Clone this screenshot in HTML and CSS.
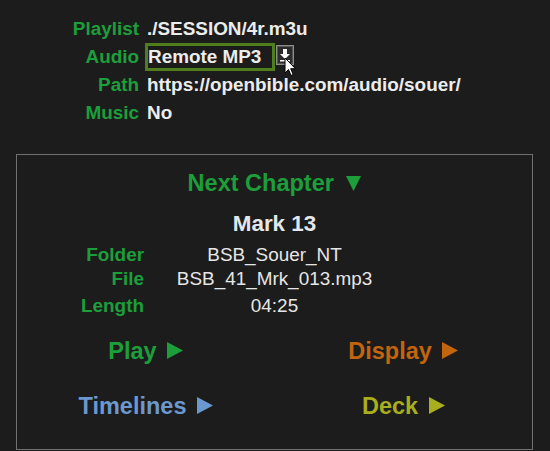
FILE: index.html
```html
<!DOCTYPE html>
<html lang="en">
<head>
    <meta charset="UTF-8" />
    <meta name="viewport" content="width=device-width, initial-scale=1.0" />
    <title>Bible Audio Player</title>
    <link rel="stylesheet" href="styles.css">
</head>
<body>
    <div class="settings">
        <span class="label">Playlist</span>
        <span class="value">./SESSION/4r.m3u</span>

        <span class="label">Audio</span>
        <span class="value">
            <span class="select">Remote MP3</span>
            <span class="drop">
                <svg width="18" height="20" viewBox="0 0 18 20">
                    <rect x="0.5" y="0.5" width="17" height="19" fill="#2b2b2b" stroke="#8c8c8c" />
                    <rect x="1.5" y="1.5" width="15" height="17" fill="none" stroke="#555" />
                    <path d="M7 4h4v5h3l-5 5-5-5h3z" fill="#fff" />
                    <rect x="4" y="15" width="10" height="1.5" fill="#fff" />
                </svg>
                <svg class="cursor" width="13" height="20" viewBox="0 0 13 20">
                    <path d="M1 1v15l3.5-3.5 2.5 6 2.2-1-2.5-5.8H11.5z" fill="#fff" stroke="#000" stroke-width="1" stroke-linejoin="round" />
                </svg>
            </span>
        </span>

        <span class="label">Path</span>
        <span class="value">https://openbible.com/audio/souer/</span>

        <span class="label">Music</span>
        <span class="value">No</span>
    </div>

    <div class="panel">
        <div class="next">Next Chapter<svg class="down" width="15" height="15" viewBox="0 0 15 15"><path d="M0 0h15L7.5 15z" fill="currentColor" /></svg></div>
        <div class="chapter">Mark 13</div>
        <div class="details">
            <span class="label">Folder</span>
            <span class="info">BSB_Souer_NT</span>
            <span></span>

            <span class="label">File</span>
            <span class="info">BSB_41_Mrk_013.mp3</span>
            <span></span>

            <span class="label spaced">Length</span>
            <span class="info spaced">04:25</span>
            <span class="spaced"></span>
        </div>
        <div class="actions">
            <a class="play">Play<svg class="go" width="16" height="17" viewBox="0 0 16 17"><path d="M0 0l16 8.5L0 17z" fill="currentColor" /></svg></a>
            <a class="display">Display<svg class="go" width="16" height="17" viewBox="0 0 16 17"><path d="M0 0l16 8.5L0 17z" fill="currentColor" /></svg></a>
            <a class="timelines">Timelines<svg class="go" width="16" height="17" viewBox="0 0 16 17"><path d="M0 0l16 8.5L0 17z" fill="currentColor" /></svg></a>
            <a class="deck">Deck<svg class="go" width="16" height="17" viewBox="0 0 16 17"><path d="M0 0l16 8.5L0 17z" fill="currentColor" /></svg></a>
        </div>
    </div>
</body>
</html>
```

FILE: styles.css
```css
body {
    font-family: "Liberation Sans", Arial, sans-serif;
    background: #1c1c1c;
    color: #ececec;
    margin: 0;
    font-size: 18.9px;
}
.label {
    color: #1c9f3b;
    font-weight: bold;
    text-align: right;
}
.settings {
    display: grid;
    grid-template-columns: 139px auto;
    column-gap: 8px;
    padding-top: 14.5px;
    line-height: 28px;
    font-weight: bold;
}
.value {
    display: flex;
    align-items: center;
}
.select {
    box-sizing: border-box;
    width: 130px;
    height: 28px;
    line-height: 22px;
    margin-left: -2px;
    border: 3px solid #4f7f1d;
    padding-left: 0;
}
.drop {
    position: relative;
    display: flex;
    margin-left: 1px;
    margin-top: -4px;
}
.cursor {
    position: absolute;
    left: 8px;
    top: 12px;
}
.panel {
    margin: 27.5px 0 0 16px;
    width: 515px;
    height: 279px;
    border: 1px solid #707070;
    padding-top: 14.5px;
    box-sizing: content-box;
}
.next {
    color: #1c9f3b;
    font-weight: bold;
    font-size: 23.5px;
    text-align: center;
    line-height: 26.8px;
}
.down {
    margin-left: 12.5px;
}
.chapter {
    font-weight: bold;
    font-size: 22.4px;
    text-align: center;
    line-height: 25.3px;
    margin-top: 15px;
    color: #e4e8ec;
}
.details {
    display: grid;
    grid-template-columns: 127px 1fr 127px;
    line-height: 23.3px;
    margin-top: 6.9px;
}
.info {
    text-align: center;
    color: #e6e6e6;
}
.spaced {
    margin-top: 4.4px;
}
.actions {
    display: grid;
    grid-template-columns: 1fr 1fr;
    row-gap: 28.9px;
    margin-top: 20px;
    font-size: 23.5px;
    font-weight: bold;
    line-height: 26.8px;
    text-align: center;
}
.go {
    margin-left: 10.5px;
}
.play { color: #1c9f3b; }
.display { color: #c2650e; }
.timelines { color: #6b98cf; }
.deck { color: #a8ae1c; }
```
